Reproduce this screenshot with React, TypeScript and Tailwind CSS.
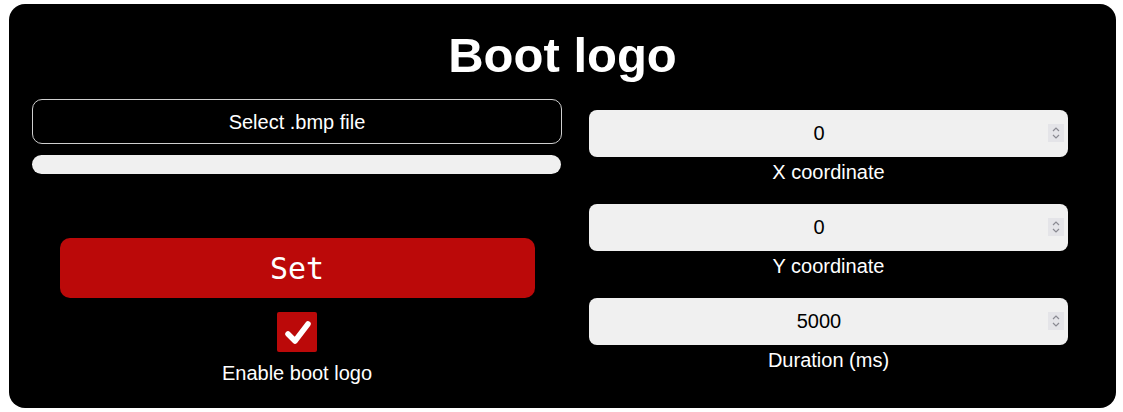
import React, { useState } from 'react';

const fields = [
  { id: 'x', label: 'X coordinate', value: '0' },
  { id: 'y', label: 'Y coordinate', value: '0' },
  { id: 'duration', label: 'Duration (ms)', value: '5000' },
];

// native spin buttons only show on hover in headless chrome, so draw them
const Spinner = () => (
  <div className="absolute right-[4px] top-[14px] w-[16px] h-[18px] bg-[#e4e4e8] flex flex-col items-center justify-center gap-[2px]">
    <svg width="10" height="6" viewBox="0 0 10 6">
      <polyline points="2,5 5,2 8,5" fill="none" stroke="#8a8a92" strokeWidth="1.2" />
    </svg>
    <svg width="10" height="6" viewBox="0 0 10 6">
      <polyline points="2,1 5,4 8,1" fill="none" stroke="#8a8a92" strokeWidth="1.2" />
    </svg>
  </div>
);

const App: React.FC = () => {
  const [enabled, setEnabled] = useState(true);
  const [values, setValues] = useState<Record<string, string>>(
    Object.fromEntries(fields.map((f) => [f.id, f.value]))
  );

  return (
    <div className="min-h-[412px] bg-white pt-[4px] pl-[9px] font-['Liberation_Sans',Arial,sans-serif]">
      <section className="w-[1107px] h-[404px] bg-black rounded-[16px] text-white">
        <h1 className="pt-[24px] text-center text-[49px] font-bold leading-[55px]">Boot logo</h1>

        <div className="mt-[16px] flex gap-[27px] pl-[23px]">
          {/* Left: file + set */}
          <div className="w-[530px] flex flex-col items-center">
            <button className="w-full h-[45px] rounded-[10px] border border-[#cfcfcf] text-[20px] text-white">
              Select .bmp file
            </button>
            <div className="mt-[11px] w-[529px] self-start h-[19px] rounded-full bg-[#f0f0f0]" />

            <button className="mt-[64px] w-[475px] h-[60px] rounded-[10px] bg-[#bb0909] text-[30px] font-['DejaVu_Sans_Mono',monospace] text-white">
              Set
            </button>

            <button
              onClick={() => setEnabled(!enabled)}
              className="mt-[14px] w-[40px] h-[40px] rounded-[2px] bg-[#bb0909] flex items-center justify-center"
              aria-pressed={enabled}
            >
              {enabled && (
                <svg width="40" height="40" viewBox="0 0 40 40">
                  <polyline
                    points="11,22 18,29 31,12"
                    fill="none"
                    stroke="white"
                    strokeWidth="5.5"
                    strokeLinecap="round"
                    strokeLinejoin="round"
                  />
                </svg>
              )}
            </button>
            <span className="mt-[10px] text-[20px] leading-[23px]">Enable boot logo</span>
          </div>

          {/* Right: numeric fields */}
          <div className="w-[479px] pt-[11px] flex flex-col gap-[20px]">
            {fields.map((f) => (
              <div key={f.id} className="flex flex-col items-center">
                <div className="relative w-full">
                  <input
                    type="number"
                    value={values[f.id]}
                    onChange={(e) => setValues({ ...values, [f.id]: e.target.value })}
                    className="w-full h-[47px] rounded-[8px] bg-[#f0f0f0] text-black text-center text-[20px] pl-[2px] pr-[21px] outline-none [appearance:textfield] [&::-webkit-inner-spin-button]:appearance-none [&::-webkit-outer-spin-button]:appearance-none"
                  />
                  <Spinner />
                </div>
                <span className="mt-[4px] text-[20px] leading-[23px]">{f.label}</span>
              </div>
            ))}
          </div>
        </div>
      </section>
    </div>
  );
};

export default App;
